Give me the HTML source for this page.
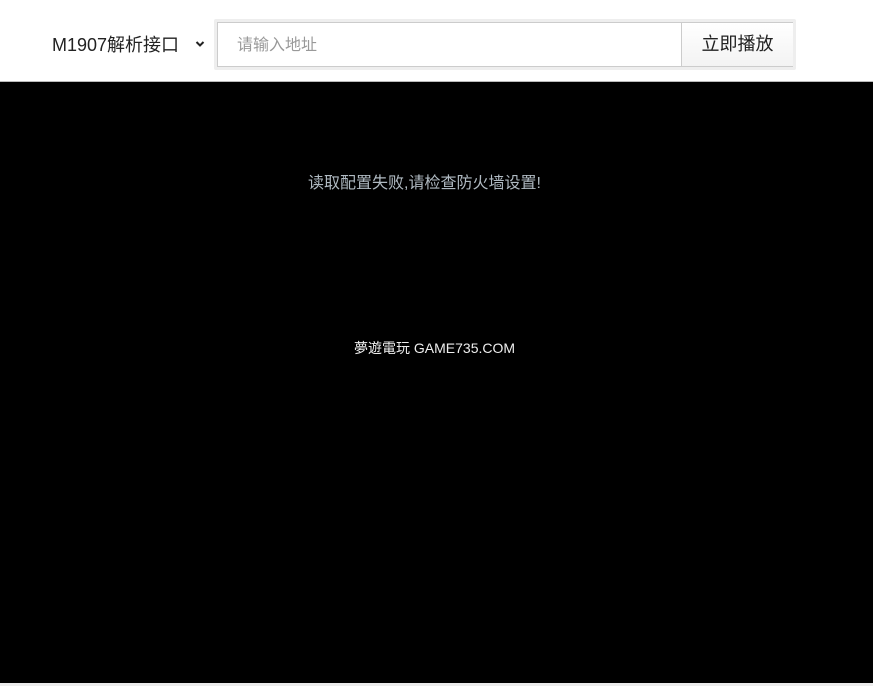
<!DOCTYPE html>
<html><head><meta charset="utf-8"><style>
html,body{margin:0;padding:0;width:873px;height:695px;background:#fff;overflow:hidden;font-family:"Liberation Sans","Noto Sans CJK SC",sans-serif;}
.top{position:absolute;left:0;top:0;width:873px;height:81px;background:#f9f9f9;background:#fff;border-bottom:1px solid #bbb;}
.sel{position:absolute;left:52px;top:33px;font-size:18px;color:#222;line-height:24px;}
.chev{position:absolute;left:195px;top:40px;}
.box{position:absolute;left:214px;top:19px;width:582px;height:51px;background:#eee;border-radius:2px;}
.inp{position:absolute;left:217px;top:22px;width:576px;height:45px;background:#fff;border:1px solid #ccc;box-sizing:border-box;}
.ph{position:absolute;left:237px;top:36px;font-size:16px;color:#999;line-height:20px;}
.btn{position:absolute;left:681px;top:23px;width:111px;height:43px;border-left:1px solid #ccc;background:linear-gradient(#fff,#f3f3f3);font-size:18px;color:#222;text-align:center;line-height:43px;}
.blk{position:absolute;left:0;top:82px;width:873px;height:601px;background:#000;}
.err{position:absolute;left:308px;top:174px;white-space:nowrap;font-size:16px;color:#b0bac2;line-height:20px;}
.logo{position:absolute;left:354px;top:338px;white-space:nowrap;font-size:14px;color:#eee;line-height:20px;}
.bot{position:absolute;left:0;top:683px;width:873px;height:3px;background:#ececec;}
</style></head><body>
<div class="top">
<div class="sel">M1907解析接口</div>
<svg class="chev" width="10" height="8" viewBox="0 0 10 8"><path d="M1.5 2 L5 5.5 L8.5 2" fill="none" stroke="#222" stroke-width="2"/></svg>
<div class="box"></div>
<div class="inp"></div>
<div class="ph">请输入地址</div>
<div class="btn">立即播放</div>
</div>
<div class="blk"></div>
<div class="err">读取配置失败,请检查防火墙设置!</div>
<div class="logo">夢遊電玩 GAME735.COM</div>
<div class="bot"></div>
</body></html>
